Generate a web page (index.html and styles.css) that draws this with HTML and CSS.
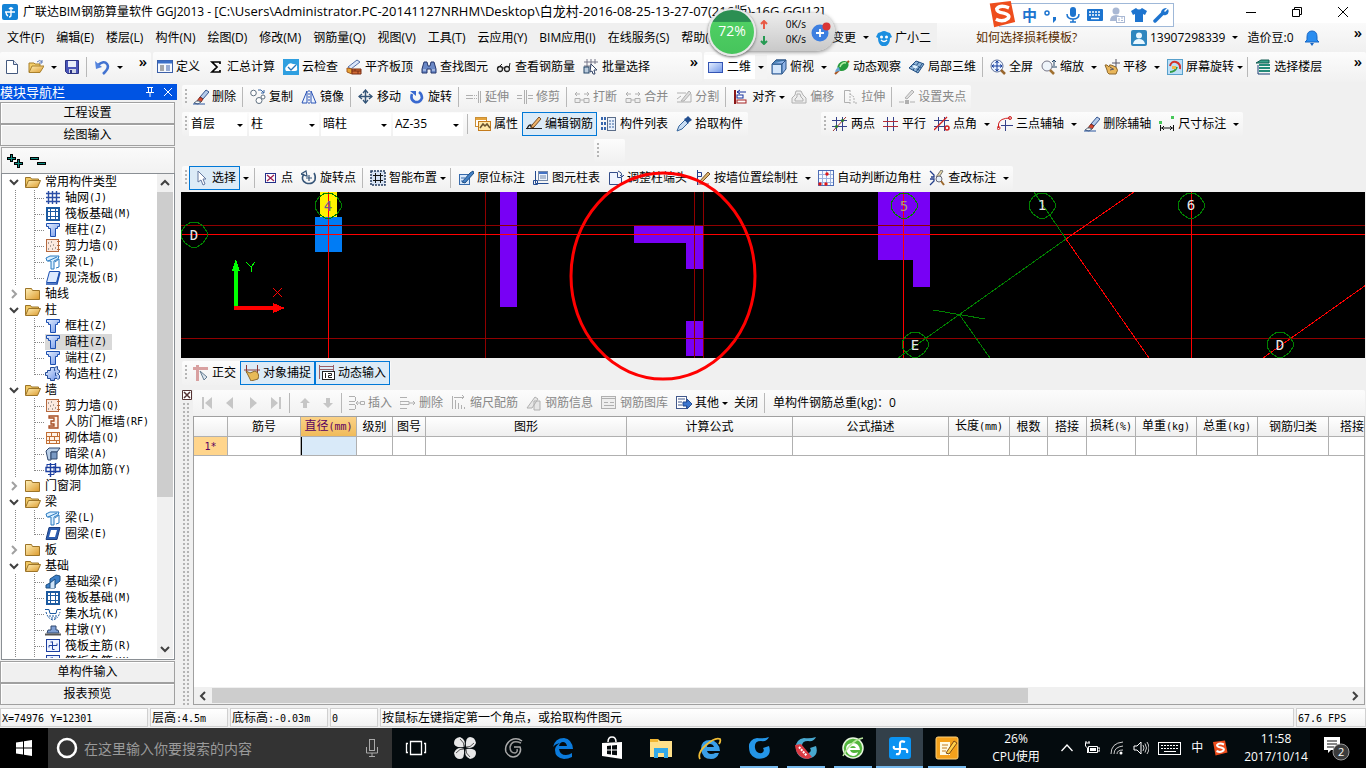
FILE: index.html
```html
<!DOCTYPE html>
<html lang="zh-CN">
<head>
<meta charset="utf-8">
<title>广联达BIM钢筋算量软件 GGJ2013</title>
<link rel="stylesheet" href="styles.css">
</head>
<body>
<svg class="sprite" aria-hidden="true">
<defs>
<linearGradient id="gFold" x1="0" y1="0" x2="1" y2="1"><stop offset="0" stop-color="#fff0b8"/><stop offset="1" stop-color="#dc9a2c"/></linearGradient>
<linearGradient id="gBlue" x1="0" y1="0" x2="1" y2="1"><stop offset="0" stop-color="#e8f1ff"/><stop offset="1" stop-color="#6f95e8"/></linearGradient>
<path id="bb" d="M10 1h6l6 4 4 6v5l-4 6-6 4h-6l-6-4-4-6v-5l4-6z"/>
</defs>
<symbol id="app" viewBox="0 0 16 16"><rect width="16" height="16" rx="2" fill="#1583d6"/><path d="M9 3v8q0 2-2 2M3 8h10M7 5q2-2 4 0M4 8q0 3 2 4" fill="none" stroke="#fff" stroke-width="1.4"/></symbol>
<symbol id="new" viewBox="0 0 16 16"><path d="M2.500 1.500h7l4 4v9h-11z" fill="#fff" stroke="#44597e"/><path d="M9.500 1.500v4h4" fill="#dfe7f5" stroke="#44597e"/></symbol>
<symbol id="open" viewBox="0 0 16 16"><path d="M1 13V4h5l1 1h5v2" fill="#f3cf6c" stroke="#a9802c"/><path d="M1 13.500l3-6.500h12l-4 6.500z" fill="url(#gFold)" stroke="#a9802c"/><path d="M9 3q3-3 5 0M14 1v3h-3" fill="none" stroke="#5a77b5"/></symbol>
<symbol id="save" viewBox="0 0 16 16"><path d="M1.500 1.500h13v13h-11l-2-2z" fill="#4a55b8" stroke="#2c3482"/><rect x="4" y="2" width="8" height="6" fill="#e9eef9"/><rect x="5" y="10" width="7" height="4" fill="#cfd5e6"/><rect x="6" y="11" width="2" height="3" fill="#2c3482"/></symbol>
<symbol id="undo" viewBox="0 0 16 16"><path d="M4 6q6-5 9-1t-4 10" fill="none" stroke="#4373d0" stroke-width="2.600"/><path d="M1 2l1 8 6-2z" fill="#5585de"/></symbol>
<symbol id="define" viewBox="0 0 16 16"><rect x=".5" y="1.500" width="15" height="12" fill="#f4f8ff" stroke="#3b5fa8"/><path d="M1 3h14" stroke="#3b6fc8" stroke-width="3"/><path d="M3 7h4M3 9h4M3 11h4" stroke="#555"/><path d="M9 7h4M9 9h4M9 11h4" stroke="#3b5fa8"/></symbol>
<symbol id="sum" viewBox="0 0 16 16"><path d="M12 5V3H4l5 5-5 5h8v-2" fill="none" stroke="#000" stroke-width="1.700"/></symbol>
<symbol id="cloud" viewBox="0 0 16 16"><rect width="16" height="16" fill="#2f9fe0"/><path d="M3 12q-2-3 1-5 2-4 6-2 5 0 4 4 1 3-2 3z" fill="#fff"/><path d="M5 8l3 3 5-5" fill="none" stroke="#2474ba" stroke-width="1.300"/></symbol>
<symbol id="top" viewBox="0 0 16 16"><path d="M2 8l9-7 3 2-9 7z" fill="#dbe7fb" stroke="#5570a8"/><path d="M1 9l5 1v5l-5-2z" fill="#e6a438" stroke="#a85b1c"/><path d="M6 10h9v5H6zM6 12h9M9 10v2M12 12v3" fill="#d06a35" stroke="#7b2e14"/></symbol>
<symbol id="find" viewBox="0 0 16 16"><path d="M3 3h3l1 4h2l1-4h3l2 7v4h-5v-4H6v4H1v-4z" fill="#6a88c6" stroke="#25376d"/><path d="M2 11h3M11 11h3" stroke="#d5e0f7"/></symbol>
<symbol id="glass" viewBox="0 0 16 16"><circle cx="4" cy="10" r="2.500" fill="#eee" stroke="#222" stroke-width="1.300"/><circle cx="11" cy="10" r="2.500" fill="#eee" stroke="#222" stroke-width="1.300"/><path d="M6 9h3M2 9l4-4M13 9l1-5" fill="none" stroke="#222"/></symbol>
<symbol id="batch" viewBox="0 0 16 16"><path d="M1 3h14M1 7h7M4 0v12M8 0v9M12 0v5" stroke="#778" fill="none"/><rect x="1" y="8" width="5" height="6" fill="#bcd" stroke="#246"/><path d="M8 5l6 6-3 0 1 4-2 0-1-3-2 1z" fill="#fff" stroke="#346"/></symbol>
<symbol id="rect2" viewBox="0 0 16 16"><rect x=".5" y="3.500" width="14" height="10" fill="url(#gBlue)" stroke="#3354b4"/></symbol>
<symbol id="cube" viewBox="0 0 16 16"><path d="M1 5l4-4h10v9l-4 5H1z" fill="#8fb4e8" stroke="#2c5486"/><path d="M1 5h10v10M11 5l4-4M1 5l4-4h10" fill="#4c86b9" stroke="#2c5486"/><rect x="2" y="6" width="8" height="8" fill="#d4e6fa"/></symbol>
<symbol id="orbit" viewBox="0 0 16 16"><path d="M1 15L15 2" stroke="#aa5520" stroke-width="2"/><ellipse cx="9" cy="7" rx="6" ry="4.500" fill="#279a3c" transform="rotate(-35 9 7)"/><path d="M6 8q2-5 6-4" stroke="#b5f0a5" stroke-width="1.500" fill="none"/><path d="M1 13q1-4 4-5l1 4z" fill="#68a6d8"/></symbol>
<symbol id="part3" viewBox="0 0 16 16"><path d="M0 9l7-7 8 3-6 9z" fill="#8db4d8" stroke="#234f82"/><path d="M4 5l8 4M2 7l8 4M10 3L4 11M13 5L7 13" stroke="#234f82" fill="none"/><path d="M5 6l4 1-2 3-4-2z" fill="#dff2ff"/></symbol>
<symbol id="full" viewBox="0 0 16 16"><circle cx="7" cy="7" r="6" fill="#e9f1ff" stroke="#607199"/><path d="M11 11l4 4" stroke="#98652d" stroke-width="2.500"/><path d="M7 2v10M2 7h10M5.500 4L7 2l1.500 2M5.500 10L7 12l1.500-2M4 5.500L2 7l2 1.500M10 5.500L12 7l-2 1.500" fill="none" stroke="#123b9c"/></symbol>
<symbol id="zoomi" viewBox="0 0 16 16"><circle cx="6" cy="7" r="5" fill="#eef4fa" stroke="#778"/><path d="M9 11l4 4" stroke="#a07031" stroke-width="2.500"/><path d="M13 1v6M11 3l2-2 2 2M11 8h5" fill="none" stroke="#246"/></symbol>
<symbol id="pan" viewBox="0 0 16 16"><path d="M1 6q2-1 4 2 0-3 2-2l5 2q3 3 0 7H5q-2-1-2-4z" fill="#e9b65a" stroke="#8c672c"/><path d="M12 0v8M8 4h8M6 8l3 2M6 11l4-1" stroke="#556" fill="none"/></symbol>
<symbol id="rots" viewBox="0 0 16 16"><rect x=".5" y=".5" width="15" height="15" fill="#bcdff7" stroke="#58a0cb"/><path d="M3 7q1-5 6-4 5 2 4 7" fill="none" stroke="#d3332c" stroke-width="2"/><path d="M3 13q5 0 7-5" stroke="#339b45" stroke-width="2" fill="none"/><rect x="5" y="7" width="4" height="3" fill="#f4b848"/></symbol>
<symbol id="floors" viewBox="0 0 16 16"><path d="M1 4l5-3h8v3z" fill="#3aa08a" stroke="#145c52"/><path d="M4 6h11M4 9h11M4 12h11" stroke="#248b79" stroke-width="2"/><path d="M3 6v9h12" stroke="#173c72" fill="none"/></symbol>
<symbol id="brush" viewBox="0 0 16 16"><path d="M13 1l3 2-6 7-3-2z" fill="#b5cbea" stroke="#35558f"/><path d="M7 8l3 2-2 3-4-1z" fill="#d9472f" stroke="#7a2b20"/><path d="M1 14q3-3 5-2l2 1-3 2z" fill="#f7f7f7" stroke="#567"/><path d="M0 15h12" stroke="#2a56a0"/></symbol>
<symbol id="copy" viewBox="0 0 16 16"><circle cx="3.500" cy="4" r="2.800" fill="#fff" stroke="#607080"/><circle cx="9" cy="11.500" r="3" fill="#fff" stroke="#607080"/><circle cx="13" cy="8" r="2" fill="#fff" stroke="#607080"/><path d="M8 1h3l3 3M14 1v3h-3" stroke="#3765a2" fill="none"/></symbol>
<symbol id="mirror" viewBox="0 0 16 16"><path d="M6 2v12H1zM10 2v12h5z" fill="#eef5ff" stroke="#2952b5"/><path d="M8 1v14" stroke="#2952b5" stroke-dasharray="2 1"/></symbol>
<symbol id="move" viewBox="0 0 16 16"><path d="M7.500 2v12M1 7.500h13" stroke="#345578" stroke-width="1.500"/><path d="M5 4l2.500-3L10 4M5 11l2.500 3L10 11M4 5L1 7.500 4 10M11 5l3 2.500L11 10" fill="none" stroke="#345578" stroke-width="1.300"/></symbol>
<symbol id="rotate" viewBox="0 0 16 16"><path d="M3 5q-2 6 3 8 5 1 7-4 0-4-3-6" fill="none" stroke="#3969cf" stroke-width="2.600"/><path d="M1 2h6v5z" fill="#3969cf"/></symbol>
<symbol id="extend" viewBox="0 0 16 16"><path d="M0 6.500h6M0 9.500h6" stroke="currentColor"/><path d="M6 6.500h5M6 9.500h5" stroke="currentColor" stroke-dasharray="1 1"/><path d="M12.500 2v12M14.500 2v12" stroke="currentColor"/></symbol>
<symbol id="trim" viewBox="0 0 16 16"><path d="M0 6.500h5M0 9.500h5M7.500 1v14M9.500 1v14M11 6.500h5M11 9.500h5" stroke="currentColor"/></symbol>
<symbol id="brk" viewBox="0 0 16 16"><path d="M1 9.500h5v4H1zM10 9.500h5v4h-5z" fill="#eee" stroke="currentColor"/><path d="M1 5h5M3 3L1 5l2 2M10 5h5M13 3l2 2-2 2M6 11h4" fill="none" stroke="currentColor"/></symbol>
<symbol id="split" viewBox="0 0 16 16"><path d="M1 4h9M1 13h14V5M1 10l4-3" fill="none" stroke="currentColor"/><path d="M5 12L13 2l2 2-7 8z" fill="#ddd" stroke="currentColor"/></symbol>
<symbol id="align" viewBox="0 0 16 16"><path d="M2 1v14" stroke="#8b1717" stroke-width="2"/><path d="M4 3h9M7 1L4 3l3 2" fill="none" stroke="#152f9d"/><rect x="4" y="6" width="6" height="3" fill="#fff" stroke="#152f9d"/><rect x="4" y="11" width="9" height="3" fill="#fff" stroke="#a52222"/></symbol>
<symbol id="offset" viewBox="0 0 16 16"><path d="M5 2h5l2 4 3 3v5H1V9l3-3z" fill="#eee" stroke="currentColor"/><path d="M6 5h3l1 3 2 2v2H4v-2l2-2z" fill="none" stroke="currentColor"/></symbol>
<symbol id="stretch" viewBox="0 0 16 16"><path d="M8 1.500H2.500v12H8" fill="none" stroke="currentColor"/><path d="M8 1v14M8 5l4 3v6h3" fill="none" stroke="currentColor" stroke-dasharray="2 1"/></symbol>
<symbol id="grip" viewBox="0 0 16 16"><path d="M0 13h5M11 13h5" stroke="currentColor"/><rect x="6" y="11" width="4" height="4" fill="currentColor"/><path d="M6 9l7-8 2 2-7 7z" fill="#ddd" stroke="currentColor"/></symbol>
<symbol id="prop" viewBox="0 0 16 16"><rect x=".5" y="1.500" width="11" height="9" fill="#fff" stroke="#c98f36"/><path d="M1 3h10" stroke="#e4a33c" stroke-width="2"/><rect x="3.500" y="5.500" width="12" height="9" fill="#ffe9a8" stroke="#c47b1c"/><path d="M5 12l3-4 2 2 2-2 3 4" fill="none" stroke="#69532d" stroke-width="1.500"/></symbol>
<symbol id="edit" viewBox="0 0 16 16"><path d="M0 12.500h16" stroke="#222"/><path d="M1 13q2-5 4-4-1 3 3 2" fill="none" stroke="#222" stroke-width="1.300"/><path d="M6 9L13 1l2 2-7 8-3 1z" fill="#efb46a" stroke="#764b24"/></symbol>
<symbol id="list" viewBox="0 0 16 16"><path d="M0 2.500h5M0 7.500h5M0 12.500h5" stroke="#3767ae" stroke-width="3" stroke-dasharray="2 1"/><rect x="6.500" y="1.500" width="8" height="13" fill="#e8f0fb" stroke="#5b6d89"/><path d="M8 5h2M8 8h2M8 11h2M11 5h2M11 8h2M11 11h2" stroke="#345f9c"/></symbol>
<symbol id="pick" viewBox="0 0 16 16"><path d="M1 15l2-5 6-6 3 3-6 6z" fill="#c9ddf3" stroke="#36669d"/><path d="M8 3l2-1 2-2 4 4-3 2-1 2z" fill="#234f90"/></symbol>
<symbol id="axis2" viewBox="0 0 16 16"><path d="M4.500 1v14M10.500 1v14M0 4.500h15M0 10.500h15" stroke="#35418a"/><path d="M1 15L14 1" stroke="#9b3230"/><circle cx="4.500" cy="10.500" r="1.500" fill="#287b2d"/><circle cx="10.500" cy="4.500" r="1.500" fill="#287b2d"/></symbol>
<symbol id="para" viewBox="0 0 16 16"><path d="M4.500 1v14M10.500 1v14" stroke="#35418a"/><path d="M0 5.500h15M0 10.500h15" stroke="#b12b35"/></symbol>
<symbol id="angle" viewBox="0 0 16 16"><path d="M4.500 1v14M10.500 1v14M0 4.500h15M0 10.500h10" stroke="#35418a"/><path d="M0 14L13 1" stroke="#d02020" stroke-width="1.300"/><circle cx="13" cy="12" r="2" fill="none" stroke="#d02020" stroke-width="1.500"/></symbol>
<symbol id="arc" viewBox="0 0 16 16"><path d="M1.500 12V8q1-6 12-6" fill="none" stroke="#d02020"/><path d="M8.500 4v11M4 9.500h12" stroke="#35418a"/><circle cx="1.500" cy="12" r="1.500" fill="none" stroke="#d02020"/><circle cx="13" cy="2" r="1.500" fill="none" stroke="#d02020"/></symbol>
<symbol id="dim" viewBox="0 0 16 16"><path d="M1.500 9v6M14.500 9v6M2 12h12M5 10l-2 2 2 2M11 10l2 2-2 2" fill="none" stroke="#111"/><path d="M0 5h3v3H0zM12 0h3v3h-3z" fill="#47c759"/></symbol>
<symbol id="cursor" viewBox="0 0 16 16"><path d="M5 1v11l3-2 2 5 2-1-2-5h3z" fill="#fff" stroke="#6478a0"/></symbol>
<symbol id="point" viewBox="0 0 16 16"><rect x="3.500" y="3.500" width="10" height="9" fill="#fff" stroke="#24308a"/><path d="M5 5l7 6M12 5l-7 6" stroke="#9c2050" stroke-width="1.300"/></symbol>
<symbol id="rotp" viewBox="0 0 16 16"><path d="M3 4q-4 6 2 9 6 2 9-3 1-4-1-7" fill="none" stroke="#365578" stroke-width="1.500"/><path d="M0 4l5-3 1 5zM8 5v6M5 8h6" fill="none" stroke="#365578" stroke-width="1.200"/></symbol>
<symbol id="smart" viewBox="0 0 16 16"><rect x="1" y="1" width="14" height="14" fill="#d6e2f3" stroke="#263e62" stroke-width="1.500" stroke-dasharray="2 1"/><path d="M5.500 3v10M10.500 3v10M3 5.500h10M3 10.500h10" stroke="#111"/><path d="M7 7h2v2H7z" fill="#d6e2f3"/></symbol>
<symbol id="note" viewBox="0 0 16 16"><rect x="1.500" y="4.500" width="10" height="10" fill="#d9e8fa" stroke="#366aab"/><path d="M4 12l8-9 3-2 1 2-9 10z" fill="#4380c5" stroke="#204f82"/><path d="M3 8h4M3 11h3" stroke="#366aab"/></symbol>
<symbol id="ctable" viewBox="0 0 16 16"><path d="M2.500 1v12.500h13M.5 10.500h4v4h-4z" fill="none" stroke="#234b91"/><rect x="5.500" y="1.500" width="9" height="9" fill="#eef5ff" stroke="#7489a8"/><path d="M6 3h8" stroke="#4472c4" stroke-width="2"/><path d="M7 6h6M7 8h6" stroke="#7489a8"/></symbol>
<symbol id="adj" viewBox="0 0 16 16"><path d="M1.500 2.500h8v5h4v7h-12z" fill="#f0f5ff" stroke="#344e8b"/><path d="M10 1q4 1 4 5M12 5l2 2 2-2" fill="none" stroke="#344e8b"/></symbol>
<symbol id="wall" viewBox="0 0 16 16"><path d="M2.500 0v15M2.500 2.500h4v4h-4" fill="none" stroke="#243f8b"/><path d="M4 12L13 2l2 2-9 9z" fill="#dbb46d" stroke="#76502b"/><path d="M3 14h11" stroke="#c02c2c"/></symbol>
<symbol id="auto" viewBox="0 0 16 16"><rect x=".5" y=".5" width="15" height="15" fill="#f6faff" stroke="#4d6db6"/><path d="M4.500 1v14M8.500 1v14M12.500 1v14M1 4.500h14M1 8.500h14M1 12.500h14" stroke="#9bb1de"/><circle cx="9" cy="4" r="1.700" fill="#e01717"/><circle cx="2" cy="14" r="1.700" fill="#e01717"/><circle cx="8" cy="14" r="1.700" fill="#e01717"/></symbol>
<symbol id="check" viewBox="0 0 16 16"><path d="M1 1l4 4v2H2M1 9h4v2l-4 4" fill="none" stroke="#243f8b" stroke-width="1.300"/><path d="M7 7L12 0l2 1-5 8" fill="#e5d6a3" stroke="#777"/><circle cx="10" cy="9" r="3" fill="#e7f1fb" stroke="#667"/><path d="M12 11l3 4" stroke="#9d692d" stroke-width="2"/></symbol>
<symbol id="ortho" viewBox="0 0 16 16"><path d="M0 3.500h15M4.500 0v16" stroke="#d8a0a0" stroke-width="3"/><path d="M7 6l7 6-3 3z" fill="#dbe5ee" stroke="#667d91"/></symbol>
<symbol id="snap" viewBox="0 0 16 16"><path d="M2.500 0v8M13.500 0v8M0 5h16" stroke="#8b3838"/><path d="M2 6l4 2 5-2q5 2 3 8l-7 2-2-4z" fill="#e7ba58" stroke="#8c6a30"/></symbol>
<symbol id="dyn" viewBox="0 0 16 16"><path d="M0 1.500h15M0 4.500h15M.5 0v14M14.500 0v6" stroke="#985e66" fill="none"/><rect x="3.500" y="6.500" width="12" height="8" fill="#fff" stroke="#222"/><path d="M6.500 8v5M9 8.500h3.500v2H9.500v2H13" fill="none" stroke="#222"/></symbol>
<symbol id="first" viewBox="0 0 16 16"><path d="M3 2h2v12H3zM13 2v12L6 8z" fill="#c6c6c6"/></symbol>
<symbol id="prev" viewBox="0 0 16 16"><path d="M11 2v12L4 8z" fill="#c6c6c6"/></symbol>
<symbol id="next" viewBox="0 0 16 16"><path d="M5 2v12l7-6z" fill="#c6c6c6"/></symbol>
<symbol id="last" viewBox="0 0 16 16"><path d="M11 2h2v12h-2zM3 2v12l7-6z" fill="#c6c6c6"/></symbol>
<symbol id="upi" viewBox="0 0 16 16"><path d="M8 3l5 5h-3v5H6V8H3z" fill="#c6c6c6"/></symbol>
<symbol id="dni" viewBox="0 0 16 16"><path d="M8 13l5-5h-3V3H6v5H3z" fill="#c6c6c6"/></symbol>
<symbol id="ins" viewBox="0 0 16 16"><path d="M0 1.500h6M0 6.500h6M0 9.500h6M0 14.500h6M6.500 2v4M6.500 10v4M7 8h4M9 6L7 8l2 2M11.500 6.500h4v3h-4z" fill="none" stroke="currentColor"/></symbol>
<symbol id="rem" viewBox="0 0 16 16"><path d="M0 2.500h7M0 13.500h7M0 6.500h9v3H0zM9 8h6M13 6l2 2-2 2" fill="none" stroke="currentColor"/></symbol>
<symbol id="scale" viewBox="0 0 16 16"><path d="M1.500 1v13M3 2.500h10M11 0l2 2-2 2M4.500 5v9M7.500 8v6M10.500 10v4M13.500 12v2" fill="none" stroke="currentColor"/></symbol>
<symbol id="info" viewBox="0 0 16 16"><path d="M1 13L9 2l3 2-6 9zM8 6h6v9H8z" fill="#e6e6e6" stroke="currentColor"/></symbol>
<symbol id="lib" viewBox="0 0 16 16"><rect x=".5" y="1.500" width="14" height="12" fill="#eee" stroke="currentColor"/><path d="M1 3.500h13M3 7.500h4M9 7.500h4M3 10.500h10" stroke="currentColor"/></symbol>
<symbol id="other" viewBox="0 0 16 16"><rect x=".5" y="1.500" width="10" height="12" fill="#fff" stroke="#42588b"/><path d="M2 4h7M2 7h4M2 10h4" stroke="#42588b"/><path d="M7 7h4V4l5 5-5 5v-3H7z" fill="#3c76cf" stroke="#234b91"/></symbol>
<symbol id="fo" viewBox="0 0 16 16"><path d="M.5 13V3.500h5l1 1.500h7V7" fill="#f0c864" stroke="#9c7428"/><path d="M.5 13.500l3-7h12l-3 7z" fill="url(#gFold)" stroke="#9c7428"/></symbol>
<symbol id="fc" viewBox="0 0 16 16"><path d="M.5 13.500V2.500h6l1 2h7v9z" fill="url(#gFold)" stroke="#9c7428"/></symbol>
<symbol id="tGrid" viewBox="0 0 16 16"><path d="M3.500 1v13M7.500 1v13M11.500 1v13M1 3.500h14M1 7.500h14M1 11.500h14" stroke="#2b4ea5" stroke-width="1.400"/></symbol>
<symbol id="tRaft" viewBox="0 0 16 16"><rect x="2" y="2" width="12" height="12" fill="#fff" stroke="#1c5aa0" stroke-width="2"/><path d="M5.500 2v12M10.500 2v12M2 5.500h12M2 10.500h12" stroke="#1c5aa0"/><rect x="5.500" y="5.500" width="5" height="5" fill="#fff" stroke="#1c5aa0"/></symbol>
<symbol id="tCol" viewBox="0 0 16 16"><path d="M1.500 1.500h13v3h-2v2h-2v8h-5v-8h-2v-2h-2z" fill="url(#gBlue)" stroke="#1c4fb0"/></symbol>
<symbol id="tShear" viewBox="0 0 16 16"><rect x="1.500" y="1.500" width="12" height="12" fill="#fbe9df" stroke="#b5693e"/><path d="M3 5h1M6 4h1M5 8h1M8 7h1M3 11h1M7 11h1M10 10h1" stroke="#555"/><path d="M12 3.500h3M12 7.500h3M12 11.500h3" stroke="#b5693e"/></symbol>
<symbol id="tBeam" viewBox="0 0 16 16"><path d="M1 4l4-2h9l-1 3-4 2v8H6V7H2z" fill="#d9efff" stroke="#2a7ac0"/><path d="M3 7l9-4M10 8l4-3v8l-3 1" stroke="#2a7ac0" fill="none"/></symbol>
<symbol id="tSlab" viewBox="0 0 16 16"><path d="M4.500 1.500h10l-3 11h-10z" fill="#dceaff" stroke="#1c4fb0"/><path d="M1 14h11l3-12" fill="none" stroke="#1c4fb0" stroke-width="1.500"/></symbol>
<symbol id="tStruct" viewBox="0 0 16 16"><path d="M5.500 1.500h4v3h3v2h-2v3h2v3h-3v2h-4v-2h-3v-3h-2v-3h2v-2h3z" fill="url(#gBlue)" stroke="#224b96"/><path d="M9.500 1.500l3-1v3l2 1v2l-2 1 2 2v3l-2 1" fill="#b9cdf3" stroke="#224b96"/></symbol>
<symbol id="tDoor" viewBox="0 0 16 16"><path d="M4 2h9v12H4v-2h5v-2H6V7h3V4H4z" fill="#fff1e6" stroke="#a84c22" stroke-width="1.300"/></symbol>
<symbol id="tBrick" viewBox="0 0 16 16"><rect x="1.500" y="2.500" width="13" height="11" fill="#fff3e8" stroke="#c26f35"/><path d="M1 6.500h14M1 10.500h14M6.500 3v3M11.500 10v3M4.500 10v3M9.500 6v4M4.500 6v4M12.500 3v3" stroke="#c26f35"/></symbol>
<symbol id="tDark" viewBox="0 0 16 16"><path d="M1 5l3-3h11l-3 4H6v8H3z" fill="#b9cfe8" stroke="#30486f"/><path d="M6 6h6v7H6z" fill="#7999c3" stroke="#30486f"/></symbol>
<symbol id="tReb" viewBox="0 0 16 16"><path d="M1 5.500h14v4H1zM5.500 1v14M10.500 1v10" fill="none" stroke="#1c3fa0" stroke-width="1.400"/><path d="M2 2.500h9M2 2v4M3 12.500h6V4" stroke="#1c3fa0" fill="none"/></symbol>
<symbol id="tRing" viewBox="0 0 16 16"><path d="M4 1.500h11l-3 12H1z" fill="#2c5db0" stroke="#1c3f80"/><path d="M6 4h6l-2 7H4z" fill="#fff"/></symbol>
<symbol id="tFBeam" viewBox="0 0 16 16"><path d="M1 14v-3l4-2V5l6-4 4 1v5l-5 4v3z" fill="#3c7fc8" stroke="#1c4f80"/><path d="M5 14V9l5-4v9" fill="#cfe4f8" stroke="#1c4f80"/></symbol>
<symbol id="tPit" viewBox="0 0 16 16"><path d="M0 3.500h4l1 4h6l1-4h4" fill="none" stroke="#1c5aa0"/><path d="M1 6q2 7 7 8 5-1 7-8M4 10h8M6 12h5" fill="none" stroke="#1c5aa0" stroke-dasharray="2 1"/></symbol>
<symbol id="tPier" viewBox="0 0 16 16"><path d="M6 4h5v4h2l1 3H2l1-3h3z" fill="#7f9fd4" stroke="#30486f"/><path d="M0 12.500h16" stroke="#555" stroke-width="2"/></symbol>
<symbol id="tMain" viewBox="0 0 16 16"><rect x="1.500" y="1.500" width="13" height="12" fill="#eef4ff" stroke="#1c3fa0"/><path d="M7.500 4h-2M7.500 3.500v8h2M4 9.500v-2h8v-2" fill="none" stroke="#1c3fa0"/></symbol>
<symbol id="sogou" viewBox="0 0 16 16"><path d="M1 2l12-1.500 2.500 12L3.500 15.500z" fill="#ee4d1c"/><path d="M12 4.500Q7 2.500 5 5q0 2 4 2.500 4 1 2.500 3-3 2.500-7 .5" fill="none" stroke="#fff" stroke-width="2"/></symbol>
<symbol id="mic" viewBox="0 0 16 16"><rect x="5" y="0" width="6" height="10" rx="3" fill="currentColor"/><path d="M2 7q0 5 6 5t6-5M8 12v3M5 15h6" fill="none" stroke="currentColor" stroke-width="1.500"/></symbol>
<symbol id="kbd" viewBox="0 0 16 16"><rect x="0" y="2" width="16" height="12" rx="1" fill="currentColor"/><path d="M2 5h12M2 8h12" stroke="#fff" stroke-width="1.500" stroke-dasharray="2 1"/><path d="M4 11.500h8" stroke="#fff" stroke-width="1.500"/></symbol>
<symbol id="man" viewBox="0 0 16 16"><circle cx="7" cy="4" r="3.500" fill="#a9b8d4"/><path d="M1 14q0-6 6-6t5 6z" fill="#a9b8d4"/><rect x="7.500" y="9.500" width="8" height="6" fill="#fff" stroke="#a9b8d4"/><path d="M10 11v3M12 11h2M12 13.500h2" stroke="#a9b8d4"/></symbol>
<symbol id="shirt" viewBox="0 0 16 16"><path d="M5 1q3 3 6 0l5 3-2 4-2-1v8H4V7L2 8 0 4z" fill="#1d74cf"/></symbol>
<symbol id="wrench" viewBox="0 0 16 16"><path d="M2 14l8-8" stroke="#1d74cf" stroke-width="3.500" stroke-linecap="round"/><path d="M14 1l-3 3 1 1 3-3q2 4-2 6-4 1-5-3 1-4 6-4z" fill="#1d74cf"/></symbol>
<symbol id="blob" viewBox="0 0 16 16"><path d="M2 3l3-1q3-2 6 0l3 1 2 4-2 1q0 6-4 8H6q-4-2-4-8L0 7z" fill="#1c8fe0"/><circle cx="5.500" cy="7" r="1.500" fill="#fff"/><circle cx="10.500" cy="7" r="1.500" fill="#fff"/><path d="M5 10q3 3 6 0" fill="none" stroke="#fff" stroke-width="1.300"/></symbol>
<symbol id="user" viewBox="0 0 16 16"><rect width="16" height="16" rx="2" fill="#2e86bf"/><circle cx="8" cy="5.500" r="3" fill="#e9f7ff"/><path d="M2 14q1-5 6-5t6 5z" fill="#e9f7ff"/></symbol>
<symbol id="bell" viewBox="0 0 16 16"><path d="M8 1q5 0 5 6v3l2 2H1l2-2V7q0-6 5-6z" fill="#2a8df0" stroke="#1766c4"/><path d="M6 13h4l-2 3z" fill="#1766c4"/></symbol>
<symbol id="win" viewBox="0 0 16 16"><path d="M0 2.500l7-1v6H0zM8 1.300L16 0v7.500H8zM0 8.500h7v6l-7-1zM8 8.500h8V16l-8-1.200z" fill="#fff"/></symbol>
<symbol id="tmic" viewBox="0 0 16 20"><rect x="5.500" y="1.500" width="5" height="11" fill="none" stroke="#aaa"/><path d="M2.500 9v6h11V9M8 15v3M5 18.500h6" fill="none" stroke="#aaa"/></symbol>
<symbol id="tview" viewBox="0 0 24 24"><path d="M6.500 5.500h11v13h-11zM4 7.500H2.500v9H4M20 7.500h1.500v9H20" fill="none" stroke="#fff" stroke-width="1.300"/></symbol>
<symbol id="fan" viewBox="0 0 24 24"><path d="M11 11Q1 12 1 7t6-6q7 3 4 10zM13 11Q12 1 17 1t6 6q-3 7-10 4zM13 13q10-1 10 4t-6 6q-7-3-4-10zM11 13q1 10-4 10t-6-6q3-7 10-4z" fill="#e8e8e8"/><path d="M7 3q5 4 4 8M21 7q-4 5-8 4M17 21q-5-4-4-8M3 17q4-5 8-4" fill="none" stroke="#555"/></symbol>
<symbol id="swirl" viewBox="0 0 24 24"><path d="M20 5q-5-4-11-1-7 5-5 12 4 7 11 4 5-4 3-9h-6" fill="none" stroke="#aaa" stroke-width="1.500"/><path d="M19 7Q10 3 8 11q0 6 5 6 3-1 2-4" fill="none" stroke="#999" stroke-width="1.500"/></symbol>
<symbol id="edge" viewBox="0 0 24 24"><path d="M2 11Q4 2 13 2q8 1 9 11H8q1 6 7 6 3 0 6-2v4q-4 2-8 2-9-1-9-9 0-4 5-7-5 1-7 4zM8 10h8q-1-4-4-4t-4 4z" fill="#0b7bdc"/></symbol>
<symbol id="store" viewBox="0 0 24 24"><path d="M2 7l20-1v17l-20-3z" fill="#fff"/><path d="M8 6q0-5 4-5t4 5" fill="none" stroke="#fff" stroke-width="1.500"/><path d="M7 10l4-.5v4H7zM12 9.400l5-.4v4.500h-5zM7 14.500h4v4l-4-.5zM12 14.500h5v4.800l-5-.6z" fill="#050b0e"/></symbol>
<symbol id="expl" viewBox="0 0 24 24"><path d="M1 3h8l2 2h12v16H1z" fill="#ffe08a"/><path d="M1 3h8v3H1z" fill="#f2b632"/><path d="M5 12h14v10h-4v-5H9v5H5z" fill="#33a9e8"/></symbol>
<symbol id="ie" viewBox="0 0 24 24"><path d="M3 13q0-9 9-9 9 1 10 11H9q1 3 4 3t4-1h4q-2 6-8 6-9 0-10-10zm6-2h7q-1-3-4-3t-3 3z" fill="#3a9fe8"/><path d="M2 23Q-1 17 8 9 17 1 22 3q1 2-1 5" fill="none" stroke="#f0bd36" stroke-width="1.800"/></symbol>
<symbol id="gg" viewBox="0 0 24 24"><path d="M22 1q-2 5-8 4-7 0-6 7 1 6 7 5 3-2 1-5l6-2q3 9-5 12-9 3-14-5Q-1 4 10 2q6 1 12-1z" fill="#2496e8"/></symbol>
<symbol id="gg2" viewBox="0 0 24 24"><path d="M22 1q-2 5-8 4-7 0-6 7 1 6 7 5 3-2 1-5l6-2q3 9-5 12-9 3-14-5Q-1 4 10 2q6 1 12-1z" fill="#48a8cf"/><path d="M1 9l6-1 11 13-4 2Q2 22 1 9z" fill="#da3b43"/><path d="M5 11l8 9" stroke="#fff" stroke-width="2" stroke-dasharray="2 1"/></symbol>
<symbol id="g360" viewBox="0 0 24 24"><circle cx="12" cy="12" r="10" fill="#52b53c" stroke="#e8f7df" stroke-width="1.500"/><path d="M5 13q0-6 7-6 6 0 7 7H9q1 3 4 3 3 0 4-1-1 4-5 4-6-1-7-7zm4-1h6q-1-2-3-2t-3 2z" fill="#fff"/><path d="M2 20Q10 4 22 2" stroke="#b9e79e" fill="none" stroke-width="1.500"/></symbol>
<symbol id="ggj" viewBox="0 0 24 24"><rect x="1" y="1" width="22" height="22" rx="3" fill="#0b93f2"/><path d="M17 6q-5-2-5 2v7q0 4-4 3M6 10q-1 3 2 3h9q3 0 2 4" fill="none" stroke="#fff" stroke-width="2.200"/></symbol>
<symbol id="memo" viewBox="0 0 24 24"><rect x="1" y="1" width="22" height="22" rx="2" fill="#f4a11c" stroke="#ffd27a"/><path d="M5 6h10v13H5z" fill="#fffbe5"/><path d="M7 9h6M7 12h5M7 15h4" stroke="#c07a20"/><path d="M11 17L19 5l3 2-8 11z" fill="#ffcf4a" stroke="#7b4a14"/></symbol>
<symbol id="caretup" viewBox="0 0 16 16"><path d="M2.500 11L8 5l5.500 6" fill="none" stroke="#fff" stroke-width="1.300"/></symbol>
<symbol id="plug" viewBox="0 0 16 16"><path d="M4.500 6.500h9v6h-9zM14 8h2v3h-2M1 3h5M2 1v2M5 1v2M1.500 3v3l2 2v5" fill="none" stroke="#fff"/><path d="M6 8h6v3H6z" fill="#fff"/></symbol>
<symbol id="wifi" viewBox="0 0 16 16"><path d="M2 14Q2 3 14 2M5 14q0-7 9-8M8 14q0-4 6-4" fill="none" stroke="#ccc"/><circle cx="12" cy="13" r="1.500" fill="#fff"/></symbol>
<symbol id="vol" viewBox="0 0 16 16"><path d="M1 6h3l4-4v12l-4-4H1z" fill="none" stroke="#fff"/><path d="M10 5q2 3 0 6M12 3.500q3 4.500 0 9M14 2q4 6 0 12" fill="none" stroke="#ccc"/></symbol>
<symbol id="tkbd" viewBox="0 0 24 16"><rect x=".5" y="2.500" width="22" height="12" fill="none" stroke="#fff"/><path d="M3 5.500h18M3 8.500h18" stroke="#fff" stroke-dasharray="2 1"/><path d="M6 11.500h12" stroke="#fff"/></symbol>
<symbol id="msg" viewBox="0 0 28 28"><path d="M2 3h16v13h-9l-3 3v-3H2z" fill="#fff"/><path d="M5 7h10M5 10h10M5 13h7" stroke="#111"/><circle cx="19" cy="18" r="8" fill="#3b3b3b" stroke="#999"/></symbol>
</svg>

<div class="app">
<header class="title">
  <svg class="i"><use href="#app"/></svg>
  <h1>广联达BIM钢筋算量软件 GGJ2013 - <span>[C:\Users\Administrator.PC-20141127NRHM\Desktop\白龙村-2016-08-25-13-27-07(216版)-16G.GGJ12]</span></h1>
  <div class="winbtns">
    <button aria-label="最小化"><svg viewBox="0 0 12 12"><path d="M1 6.500h10" stroke="#000"/></svg></button>
    <button aria-label="还原"><svg viewBox="0 0 12 12"><path d="M1.500 3.500h7v7h-7zM3.500 3.500v-2h7v7h-2" fill="none" stroke="#000"/></svg></button>
    <button aria-label="关闭"><svg viewBox="0 0 12 12"><path d="M1 1l10 10M11 1L1 11" stroke="#000"/></svg></button>
  </div>
</header>

<div class="menurow">
  <nav class="menu">
    <button>文件(F)</button><button>编辑(E)</button><button>楼层(L)</button><button>构件(N)</button><button>绘图(D)</button><button>修改(M)</button><button>钢筋量(Q)</button><button>视图(V)</button><button>工具(T)</button><button>云应用(Y)</button><button>BIM应用(I)</button><button>在线服务(S)</button><button>帮助(H)</button>
  </nav>
  <div class="menu2"><button class="tb">新建变更</button><button class="car" aria-label="更多"></button><button class="tb"><svg class="i"><use href="#blob"/></svg>广小二</button></div>
  <div class="panel ask"><a href="#">如何选择损耗模板?</a></div>
  <div class="panel acct"><button class="tb"><svg class="i"><use href="#user"/></svg>13907298339</button><button class="car" aria-label="账号"></button><span class="beans">造价豆:0</span><button class="tb" aria-label="通知"><svg class="i"><use href="#bell"/></svg></button><button class="more" aria-label="更多">»</button></div>
</div>

<div class="toprow">
  <div class="bar b1"><button class="tb" aria-label="新建"><svg class="i"><use href="#new"/></svg></button><button class="tb" aria-label="打开"><svg class="i"><use href="#open"/></svg></button><button class="car" aria-label="打开选项"></button><button class="tb" aria-label="保存"><svg class="i"><use href="#save"/></svg></button><i class="sep"></i><button class="tb" aria-label="撤销"><svg class="i"><use href="#undo"/></svg></button><button class="car" aria-label="撤销选项"></button><button class="more" aria-label="更多">»</button></div>
  <div class="bar b2"><button class="tb"><svg class="i"><use href="#define"/></svg>定义</button><button class="tb"><svg class="i"><use href="#sum"/></svg>汇总计算</button><button class="tb"><svg class="i"><use href="#cloud"/></svg>云检查</button><button class="tb"><svg class="i"><use href="#top"/></svg>平齐板顶</button><button class="tb"><svg class="i"><use href="#find"/></svg>查找图元</button><button class="tb"><svg class="i"><use href="#glass"/></svg>查看钢筋量</button><button class="tb"><svg class="i"><use href="#batch"/></svg>批量选择</button><button class="more" aria-label="更多">»</button></div>
  <div class="bar b3"><span class="white"><button class="tb"><svg class="i"><use href="#rect2"/></svg>二维</button><button class="car" aria-label="二维选项"></button></span><button class="tb"><svg class="i"><use href="#cube"/></svg>俯视</button><button class="car" aria-label="俯视选项"></button><button class="tb"><svg class="i"><use href="#orbit"/></svg>动态观察</button><button class="tb"><svg class="i"><use href="#part3"/></svg>局部三维</button><i class="sep"></i><button class="tb"><svg class="i"><use href="#full"/></svg>全屏</button><button class="tb"><svg class="i"><use href="#zoomi"/></svg>缩放</button><button class="car" aria-label="缩放选项"></button><button class="tb"><svg class="i"><use href="#pan"/></svg>平移</button><button class="car" aria-label="平移选项"></button><button class="tb dd"><svg class="i"><use href="#rots"/></svg>屏幕旋转</button><i class="sep"></i><button class="tb"><svg class="i"><use href="#floors"/></svg>选择楼层</button><button class="more" aria-label="更多">»</button></div>
</div>

<main class="body">
<aside class="side">
  <div class="sidehead"><h2>模块导航栏</h2><button aria-label="固定"><svg viewBox="0 0 12 12"><path d="M3 1.500h6M4.500 1v5M7.500 1v5M2 6.500h8M6 7v4" stroke="#fff" fill="none"/></svg></button><button aria-label="关闭"><svg viewBox="0 0 12 12"><path d="M2 2l8 8M10 2l-8 8" stroke="#fff"/></svg></button></div>
  <button class="stack">工程设置</button>
  <button class="stack">绘图输入</button>
  <div class="sidetools"><button aria-label="全部展开"><svg viewBox="0 0 18 16"><path d="M5.500 1v8M1 5.500h9M12.500 6v9M8 10.500h9" stroke="#000" stroke-width="3"/><path d="M5.500 2v6M2 5.500h7M12.500 7v7M9 10.500h7" stroke="#0d8a80"/></svg></button><button aria-label="全部折叠"><svg viewBox="0 0 18 16"><path d="M1 5.500h9M8 10.500h9" stroke="#000" stroke-width="3"/><path d="M2 5.500h7M9 10.500h7" stroke="#0d8a80"/></svg></button></div>
  <div class="treebox">
  <ul class="tree" role="tree">
    <li class="g" role="treeitem"><svg class="chev"><path d="M1 3l4 4 4-4"/></svg><svg class="i"><use href="#fo"/></svg>常用构件类型</li>
    <li class="c"><span><svg class="i"><use href="#tGrid"/></svg>轴网<b>(J)</b></span></li>
    <li class="c"><span><svg class="i"><use href="#tRaft"/></svg>筏板基础<b>(M)</b></span></li>
    <li class="c"><span><svg class="i"><use href="#tCol"/></svg>框柱<b>(Z)</b></span></li>
    <li class="c"><span><svg class="i"><use href="#tShear"/></svg>剪力墙<b>(Q)</b></span></li>
    <li class="c"><span><svg class="i"><use href="#tBeam"/></svg>梁<b>(L)</b></span></li>
    <li class="c end"><span><svg class="i"><use href="#tSlab"/></svg>现浇板<b>(B)</b></span></li>
    <li class="g shut"><svg class="chev"><path d="M3 1l4 4-4 4"/></svg><svg class="i"><use href="#fc"/></svg>轴线</li>
    <li class="g"><svg class="chev"><path d="M1 3l4 4 4-4"/></svg><svg class="i"><use href="#fo"/></svg>柱</li>
    <li class="c"><span><svg class="i"><use href="#tCol"/></svg>框柱<b>(Z)</b></span></li>
    <li class="c"><span class="on"><svg class="i"><use href="#tCol"/></svg>暗柱<b>(Z)</b></span></li>
    <li class="c"><span><svg class="i"><use href="#tCol"/></svg>端柱<b>(Z)</b></span></li>
    <li class="c end"><span><svg class="i"><use href="#tStruct"/></svg>构造柱<b>(Z)</b></span></li>
    <li class="g"><svg class="chev"><path d="M1 3l4 4 4-4"/></svg><svg class="i"><use href="#fo"/></svg>墙</li>
    <li class="c"><span><svg class="i"><use href="#tShear"/></svg>剪力墙<b>(Q)</b></span></li>
    <li class="c"><span><svg class="i"><use href="#tDoor"/></svg>人防门框墙<b>(RF)</b></span></li>
    <li class="c"><span><svg class="i"><use href="#tBrick"/></svg>砌体墙<b>(Q)</b></span></li>
    <li class="c"><span><svg class="i"><use href="#tDark"/></svg>暗梁<b>(A)</b></span></li>
    <li class="c end"><span><svg class="i"><use href="#tReb"/></svg>砌体加筋<b>(Y)</b></span></li>
    <li class="g shut"><svg class="chev"><path d="M3 1l4 4-4 4"/></svg><svg class="i"><use href="#fc"/></svg>门窗洞</li>
    <li class="g"><svg class="chev"><path d="M1 3l4 4 4-4"/></svg><svg class="i"><use href="#fo"/></svg>梁</li>
    <li class="c"><span><svg class="i"><use href="#tBeam"/></svg>梁<b>(L)</b></span></li>
    <li class="c end"><span><svg class="i"><use href="#tRing"/></svg>圈梁<b>(E)</b></span></li>
    <li class="g shut"><svg class="chev"><path d="M3 1l4 4-4 4"/></svg><svg class="i"><use href="#fc"/></svg>板</li>
    <li class="g"><svg class="chev"><path d="M1 3l4 4 4-4"/></svg><svg class="i"><use href="#fo"/></svg>基础</li>
    <li class="c"><span><svg class="i"><use href="#tFBeam"/></svg>基础梁<b>(F)</b></span></li>
    <li class="c"><span><svg class="i"><use href="#tRaft"/></svg>筏板基础<b>(M)</b></span></li>
    <li class="c"><span><svg class="i"><use href="#tPit"/></svg>集水坑<b>(K)</b></span></li>
    <li class="c"><span><svg class="i"><use href="#tPier"/></svg>柱墩<b>(Y)</b></span></li>
    <li class="c"><span><svg class="i"><use href="#tMain"/></svg>筏板主筋<b>(R)</b></span></li>
    <li class="c"><span><svg class="i"><use href="#tMain"/></svg>筏板负筋<b>(X)</b></span></li>
  </ul>
  <div class="vscroll"><svg class="chev"><path d="M1 7l4-4 4 4"/></svg><div class="track"><div class="thumb"></div></div><svg class="chev"><path d="M1 3l4 4 4-4"/></svg></div>
  </div>
  <button class="stack">单构件输入</button>
  <button class="stack">报表预览</button>
</aside>

<section class="work">
  <div class="row r1"><div class="bar"><i class="dots"></i><button class="tb"><svg class="i"><use href="#brush"/></svg>删除</button><i class="sep"></i><button class="tb"><svg class="i"><use href="#copy"/></svg>复制</button><button class="tb"><svg class="i"><use href="#mirror"/></svg>镜像</button><i class="sep"></i><button class="tb"><svg class="i"><use href="#move"/></svg>移动</button><button class="tb"><svg class="i"><use href="#rotate"/></svg>旋转</button><i class="sep"></i><button class="tb" disabled><svg class="i"><use href="#extend"/></svg>延伸</button><button class="tb" disabled><svg class="i"><use href="#trim"/></svg>修剪</button><i class="sep"></i><button class="tb" disabled><svg class="i"><use href="#brk"/></svg>打断</button><button class="tb" disabled><svg class="i"><use href="#brk"/></svg>合并</button><button class="tb" disabled><svg class="i"><use href="#split"/></svg>分割</button><i class="sep"></i><button class="tb dd"><svg class="i"><use href="#align"/></svg>对齐</button><button class="tb" disabled><svg class="i"><use href="#offset"/></svg>偏移</button><button class="tb" disabled><svg class="i"><use href="#stretch"/></svg>拉伸</button><i class="sep"></i><button class="tb" disabled><svg class="i"><use href="#grip"/></svg>设置夹点</button></div></div>
  <div class="row r2"><div class="bar"><i class="dots"></i><label class="combo first"><select aria-label="楼层"><option>首层</option></select></label><label class="combo"><select aria-label="类别"><option>柱</option></select></label><label class="combo"><select aria-label="类型"><option>暗柱</option></select></label><label class="combo"><select aria-label="构件"><option>AZ-35</option></select></label><i class="sep"></i><button class="tb"><svg class="i"><use href="#prop"/></svg>属性</button><button class="tb hot"><svg class="i"><use href="#edit"/></svg>编辑钢筋</button><button class="tb"><svg class="i"><use href="#list"/></svg>构件列表</button><button class="tb"><svg class="i"><use href="#pick"/></svg>拾取构件</button></div>
  <div class="bar"><i class="dots"></i><button class="tb"><svg class="i"><use href="#axis2"/></svg>两点</button><button class="tb"><svg class="i"><use href="#para"/></svg>平行</button><button class="tb"><svg class="i"><use href="#angle"/></svg>点角</button><button class="car" aria-label="点角选项"></button><button class="tb"><svg class="i"><use href="#arc"/></svg>三点辅轴</button><button class="car" aria-label="三点辅轴选项"></button><button class="tb"><svg class="i"><use href="#brush"/></svg>删除辅轴</button><button class="tb"><svg class="i"><use href="#dim"/></svg>尺寸标注</button><button class="car" aria-label="尺寸标注选项"></button></div></div>
  <div class="row r3"><div class="bar"><i class="dots"></i></div></div>
  <div class="row r4"><div class="bar"><i class="dots"></i><button class="tb hot"><svg class="i"><use href="#cursor"/></svg>选择</button><button class="car" aria-label="选择选项"></button><i class="sep"></i><button class="tb"><svg class="i"><use href="#point"/></svg>点</button><button class="tb"><svg class="i"><use href="#rotp"/></svg>旋转点</button><i class="sep"></i><button class="tb dd"><svg class="i"><use href="#smart"/></svg>智能布置</button><i class="sep"></i><button class="tb"><svg class="i"><use href="#note"/></svg>原位标注</button><button class="tb"><svg class="i"><use href="#ctable"/></svg>图元柱表</button><button class="tb"><svg class="i"><use href="#adj"/></svg>调整柱端头</button><button class="tb"><svg class="i"><use href="#wall"/></svg>按墙位置绘制柱</button><button class="car" aria-label="按墙位置绘制柱选项"></button><button class="tb"><svg class="i"><use href="#auto"/></svg>自动判断边角柱</button><button class="tb"><svg class="i"><use href="#check"/></svg>查改标注</button><button class="car" aria-label="查改标注选项"></button></div></div>
  <div class="canvas">
    <svg class="cad" shape-rendering="crispEdges">
      <g fill="#7800f5"><rect x="319" y="0" width="17" height="115"/><path d="M453 34h69v43h-17V51h-52zM505 129h17v35h-17zM697 0h52v95h-17V68h-35z"/></g>
      <rect x="139" y="0" width="17" height="25" fill="#fff200"/><rect x="134" y="25" width="27" height="35" fill="#007cf5"/>
      <g fill="#900000"><rect y="33" width="100%" height="1"/><rect y="146" width="100%" height="1"/><rect x="304" width="1" height="166"/><rect x="513" width="1" height="166"/><rect x="522" width="1" height="166"/></g>
      <g fill="#f00"><rect y="42" width="100%" height="1"/><rect x="147" width="1" height="166"/><rect x="722" width="1" height="166"/><rect x="1010" width="1" height="166"/></g>
      <path d="M953 0L885 47l83 119M1082 166l103-73 100-71" stroke="#f00" fill="none"/>
      <g stroke="#008000" fill="none"><path d="M885 47L717 166M853 0l32 47M752 118l52 9M778 122l31 44"/><use href="#bb" x="134"/><use href="#bb" x="710"/><use href="#bb" x="848"/><use href="#bb" x="997"/><use href="#bb" x="0" y="29"/><use href="#bb" x="721" y="139"/><use href="#bb" x="1086" y="139"/></g>
      <g class="marks"><text x="147" y="19" fill="#6e5a90">4</text><text x="723" y="19" fill="#b09a70">5</text><text x="861" y="18">1</text><text x="1010" y="18">6</text><text x="13" y="48">D</text><text x="734" y="158">E</text><text x="1099" y="158">D</text></g>
      <path d="M55 117V78" stroke="#0f0" stroke-width="4"/><path d="M55 67l4 12h-8z" fill="#0f0"/><path d="M53 116h42" stroke="#f00" stroke-width="4"/><path d="M104 116l-12-5v10z" fill="#f00"/>
      <path d="M65 70l5 5 4-5M70 75v5" stroke="#0f0" fill="none"/><path d="M92 96l9 9M101 96l-9 9" stroke="#f00"/>
    </svg>
    <svg class="mark" viewBox="0 0 188 210"><ellipse cx="94" cy="105" rx="92" ry="103" fill="none" stroke="#f00" stroke-width="3"/></svg>
  </div>
  <div class="row r5"><div class="bar"><i class="dots"></i><button class="tb"><svg class="i"><use href="#ortho"/></svg>正交</button><button class="tb hot"><svg class="i"><use href="#snap"/></svg>对象捕捉</button><button class="tb hot"><svg class="i"><use href="#dyn"/></svg>动态输入</button></div></div>
  <div class="detail">
    <div class="gripcol"><button aria-label="关闭面板"><svg viewBox="0 0 10 10"><path d="M.5 .5h9v9h-9z" fill="#fff" stroke="#533"/><path d="M2 2l6 6M8 2L2 8" stroke="#533" stroke-width="1.500"/></svg></button><div class="griptex"></div></div>
    <div class="dmain">
      <div class="bar dbar"><button class="tb nav" aria-label="第一条" disabled><svg class="i"><use href="#first"/></svg></button><button class="tb nav" aria-label="上一条" disabled><svg class="i"><use href="#prev"/></svg></button><button class="tb nav" aria-label="下一条" disabled><svg class="i"><use href="#next"/></svg></button><button class="tb nav" aria-label="最后一条" disabled><svg class="i"><use href="#last"/></svg></button><i class="sep"></i><button class="tb nav" aria-label="上移" disabled><svg class="i"><use href="#upi"/></svg></button><button class="tb nav" aria-label="下移" disabled><svg class="i"><use href="#dni"/></svg></button><i class="sep"></i><button class="tb" disabled><svg class="i"><use href="#ins"/></svg>插入</button><button class="tb" disabled><svg class="i"><use href="#rem"/></svg>删除</button><button class="tb" disabled><svg class="i"><use href="#scale"/></svg>缩尺配筋</button><button class="tb" disabled><svg class="i"><use href="#info"/></svg>钢筋信息</button><button class="tb" disabled><svg class="i"><use href="#lib"/></svg>钢筋图库</button><button class="tb dd"><svg class="i"><use href="#other"/></svg>其他</button><button class="tb">关闭</button><i class="sep"></i><span class="total">单构件钢筋总重(kg)：0</span></div>
      <div class="gridbox">
      <table>
        <colgroup><col class="w34"><col class="w73"><col class="w56"><col class="w36"><col class="w33"><col class="w201"><col class="w166"><col class="w156"><col class="w61"><col class="w38"><col class="w39"><col class="w49"><col class="w61"><col class="w61"><col class="w71"><col class="w71"></colgroup>
        <thead><tr><th></th><th>筋号</th><th class="sel">直径<b>(mm)</b></th><th>级别</th><th>图号</th><th>图形</th><th>计算公式</th><th>公式描述</th><th>长度<b>(mm)</b></th><th>根数</th><th>搭接</th><th>损耗<b>(%)</b></th><th>单重<b>(kg)</b></th><th>总重<b>(kg)</b></th><th>钢筋归类</th><th>搭接形式</th></tr></thead>
        <tbody><tr><th class="rowno"><b>1*</b></th><td></td><td class="cur"></td><td></td><td></td><td></td><td></td><td></td><td></td><td></td><td></td><td></td><td></td><td></td><td></td><td></td></tr></tbody>
      </table>
      <div class="hscroll"><svg class="chev"><path d="M7 1L3 5l4 4"/></svg><div class="htrack"><div class="hthumb"></div></div><svg class="chev"><path d="M3 1l4 4-4 4"/></svg></div>
      </div>
    </div>
  </div>
</section>
</main>

<footer class="status"><span class="s1"><b>X=74976 Y=12301</b></span><span class="s2">层高<b>:4.5m</b></span><span class="s3">底标高<b>:-0.03m</b></span><span class="s4"><b>0</b></span><span class="s5">按鼠标左键指定第一个角点，或拾取构件图元</span><span class="s6"><b>67.6 FPS</b></span></footer>

<div class="task">
  <button class="start" aria-label="开始"><svg><use href="#win"/></svg></button>
  <label class="search"><svg class="ring" viewBox="0 0 22 22"><circle cx="11" cy="11" r="9" fill="none" stroke="#fff" stroke-width="2.500"/></svg><input type="text" placeholder="在这里输入你要搜索的内容" aria-label="搜索"><svg class="tmic"><use href="#tmic"/></svg></label>
  <div class="apps"><button aria-label="任务视图"><svg><use href="#tview"/></svg></button><button aria-label="加速器"><svg><use href="#fan"/></svg></button><button aria-label="螺旋"><svg><use href="#swirl"/></svg></button><button aria-label="Edge"><svg><use href="#edge"/></svg></button><button aria-label="应用商店"><svg><use href="#store"/></svg></button><button aria-label="文件资源管理器"><svg><use href="#expl"/></svg></button><button aria-label="IE"><svg><use href="#ie"/></svg></button><button class="run" aria-label="广联达"><svg><use href="#gg"/></svg></button><button class="run" aria-label="广联达计价"><svg><use href="#gg2"/></svg></button><button class="run" aria-label="浏览器"><svg><use href="#g360"/></svg></button><button class="run act" aria-label="钢筋算量"><svg><use href="#ggj"/></svg></button><button class="run" aria-label="便笺"><svg><use href="#memo"/></svg></button></div>
  <div class="cpu"><span>26%</span><span>CPU使用</span></div>
  <div class="tray"><svg><use href="#caretup"/></svg><svg><use href="#plug"/></svg><svg><use href="#wifi"/></svg><svg><use href="#vol"/></svg><svg class="wide"><use href="#tkbd"/></svg><span>中</span><svg><use href="#sogou"/></svg></div>
  <div class="clock"><span>11:58</span><span>2017/10/14</span></div>
  <button class="notif" aria-label="通知"><svg><use href="#msg"/></svg><span>2</span></button>
</div>

<div class="ime"><svg class="logo"><use href="#sogou"/></svg><div class="imebar"><span>中</span><svg viewBox="0 0 16 16"><circle cx="4" cy="6" r="2" fill="none" stroke="currentColor" stroke-width="1.500"/><path d="M10 10h3v3l-3 3" fill="currentColor"/></svg><svg><use href="#mic"/></svg><svg><use href="#kbd"/></svg><svg><use href="#man"/></svg><svg><use href="#shirt"/></svg><svg><use href="#wrench"/></svg></div></div>

<div class="meter"><div class="caps"><div class="rates"><span><svg viewBox="0 0 8 10"><path d="M4 1v8M1 4l3-3 3 3" fill="none" stroke="#e85a45" stroke-width="2"/></svg>0K/s</span><span><svg viewBox="0 0 8 10"><path d="M4 1v8M1 6l3 3 3-3" fill="none" stroke="#259a52" stroke-width="2"/></svg>0K/s</span></div><svg class="plus" viewBox="0 0 20 20"><circle cx="9" cy="11" r="8.500" fill="#3d7fe0"/><path d="M9 7v8M5 11h8" stroke="#fff" stroke-width="1.800"/><circle cx="15.500" cy="4.500" r="4" fill="#d93434"/></svg></div><div class="ball">72%</div></div>
</div>
</body>
</html>
```
FILE: styles.css
```css
* { box-sizing: border-box; }
html, body { height: 100%; margin: 0; }
body { background: #f0f0f0; color: #000; font: 12px/16px "Open Sans", "Noto Sans CJK SC", sans-serif; overflow: hidden; }
button { border: 0; padding: 0; margin: 0; background: none; font: inherit; color: inherit; white-space: nowrap; }
h1, h2 { margin: 0; font: inherit; white-space: nowrap; }
svg { display: block; flex: none; }
b { font: 10px/16px "DejaVu Sans Mono", monospace; }
.sprite { position: absolute; width: 0; height: 0; }
.i { width: 16px; height: 16px; }
.app { display: flex; flex-direction: column; height: 100vh; position: relative; }

.title { display: flex; align-items: center; height: 23px; padding-left: 2px; gap: 5px; background: #fff; }
.title h1 { flex: 1; }
.title h1 span { font-size: 13px; }
.winbtns { display: flex; }
.winbtns button { width: 46px; height: 22px; display: flex; align-items: center; justify-content: center; }
.winbtns svg { width: 12px; height: 12px; }

.menurow { display: flex; height: 29px; align-items: stretch; }
.menu { flex: 0 0 804px; display: flex; align-items: center; gap: 2px; padding-left: 2px; }
.menu button { padding: 0 5px; }
.menu2 { flex: 0 0 133px; display: flex; align-items: center; }
.menu2, .menu { overflow: hidden; }
.panel { background: linear-gradient(#fafafa, #f0f0f0); display: flex; align-items: center; }
.ask { flex: 0 0 188px; padding-left: 39px; }
.ask a { color: #5a2d00; text-decoration: none; }
.acct { flex: 1; padding-left: 2px; }
.beans { padding: 0 6px; }

.toprow { display: flex; height: 30px; margin-bottom: 2px; gap: 2px; }
.bar { display: flex; align-items: center; background: linear-gradient(#fcfcfc, #f1f1f1); border-radius: 2px; }
.b1 { flex: 0 0 151px; }
.b2 { flex: 0 0 549px; }
.b3 { flex: 1; min-width: 0; }
.tb { display: flex; align-items: center; gap: 3px; height: 24px; padding: 0 4px; flex: none; }
.tb:disabled { color: #888; }
.tb:disabled .i { color: #b0b0b0; }
.hot { background: #dcebf7; box-shadow: inset 0 0 0 1px #0078d7; }
.car { width: 12px; height: 24px; display: flex; align-items: center; justify-content: center; flex: none; }
.car::before, .dd::after { content: ""; border: 3px solid transparent; border-top-color: #000; border-bottom: 0; }
.dd { padding-right: 2px; }
.sep { flex: none; width: 6px; height: 20px; background: linear-gradient(#b8b8b8, #b8b8b8) 2px 0 / 1px 100% no-repeat; }
.more { align-self: flex-start; margin-left: auto; padding: 0 4px; font-size: 15px; font-weight: 600; line-height: 18px; }
.white { display: flex; background: #fff; }
.white .car { background: #f4f4f4; }
.dots { flex: none; width: 7px; height: 16px; background: repeating-linear-gradient(#b5b5b5 0 2px, transparent 2px 4px) 3px 0 / 2px 100% no-repeat; }

.body { flex: 1; display: flex; min-height: 0; }
.side { flex: 0 0 177px; display: flex; flex-direction: column; padding-bottom: 3px; }
.sidehead { flex: none; height: 16px; background: #0054e3; color: #fff; display: flex; align-items: center; margin-bottom: 2px; gap: 6px; padding-right: 3px; }
.sidehead h2 { flex: 1; font-size: 13px; line-height: 15px; }
.sidehead svg { width: 12px; height: 12px; }
.stack { flex: none; height: 22px; margin-right: 2px; border: 1px solid #a0a0a0; box-shadow: inset 1px 1px #fff; background: #f0f0f0; line-height: 18px; }
.sidetools { flex: none; height: 26px; margin: 1px 2px 0 1px; border: 1px solid #a5a5a5; border-bottom: 0; background: linear-gradient(#fafafa, #f2f2f2); display: flex; align-items: center; padding-left: 4px; gap: 5px; }
.sidetools svg { width: 18px; height: 16px; }
.treebox { flex: 1; min-height: 0; display: flex; margin: 0 2px 1px 1px; border: 1px solid #8a8f94; background: #fff; padding: 0 1px 1px; }
.tree { flex: 1; margin: 0; padding: 0; list-style: none; overflow: hidden; white-space: nowrap; }
.tree li { height: 16px; line-height: 16px; display: flex; align-items: center; }
.tree .g { padding-left: 6px; gap: 4px; }
.tree .g .i { margin-left: 2px; }
.chev { width: 10px; height: 10px; fill: none; stroke: #404040; stroke-width: 2; }
.shut .chev { stroke: #a0a0a0; }
.tree .c { padding-left: 42px; background-repeat: no-repeat;
  background-image: repeating-linear-gradient(#888 0 1px, transparent 1px 2px), repeating-linear-gradient(#888 0 1px, transparent 1px 2px), repeating-linear-gradient(to right, #888 0 1px, transparent 1px 2px);
  background-size: 1px 16px, 1px 16px, 10px 1px; background-position: 12px 0, 31px 0, 32px 8px; }
.tree .end { background-size: 1px 16px, 1px 9px, 10px 1px; }
.tree span { display: flex; align-items: center; gap: 4px; padding-right: 5px; }
.tree span b { margin-left: -4px; }
.tree .on { background: #d9d9d9; }
.vscroll { width: 16px; background: #f0f0f0; display: flex; flex-direction: column; align-items: center; gap: 4px; padding: 4px 0; }
.track { flex: 1; width: 16px; }
.thumb { width: 100%; height: 68%; background: #cdcdcd; }

.work { flex: 1; min-width: 0; display: flex; flex-direction: column; padding: 1px 0 0 5px; }
.row { display: flex; flex: none; margin-bottom: 3px; }
.row .bar { height: 24px; padding-right: 1px; }
.r2 { gap: 73px; }
.r3 { padding-left: 412px; }
.r3 .bar { width: 31px; height: 23px; margin-bottom: 1px; }
.r4 { margin-bottom: 2px; }
.combo { position: relative; flex: none; width: 70px; margin-right: 2px; background: #fff; display: flex; }
.combo.first { width: 58px; }
.combo::after { content: ""; position: absolute; right: 4px; top: 11px; border: 3px solid transparent; border-top-color: #000; border-bottom: 0; pointer-events: none; }
.combo select { appearance: none; border: 0; background: none; width: 100%; height: 23px; padding: 0 2px; font: inherit; color: inherit; }
.canvas { position: relative; flex: none; height: 166px; margin-left: -1px; margin-right: 1px; background: #000; }
.cad { width: 100%; height: 100%; overflow: hidden; }
.marks { fill: #e8e8e8; font: 14px "DejaVu Sans Mono", monospace; text-anchor: middle; }
.mark { position: absolute; left: 388px; top: -21px; width: 188px; height: 210px; pointer-events: none; z-index: 2; }
.r5 { margin: 3px 0 5px; }

.detail { flex: 1; min-height: 0; display: flex; padding-bottom: 3px; }
.gripcol { flex: 0 0 11px; display: flex; flex-direction: column; gap: 2px; }
.gripcol svg { width: 10px; height: 10px; }
.griptex { flex: 1; background: radial-gradient(circle, #b4b4b4 1px, transparent 1px) 0 0 / 4px 4px; margin-right: 2px; }
.dmain { flex: 1; min-width: 0; display: flex; flex-direction: column; margin-right: 1px; }
.dbar { height: 26px; flex: none; padding-left: 2px; }
.nav { width: 23px; }
.total { padding-left: 5px; }
.gridbox { flex: 1; min-height: 0; background: #fff; border: 1px solid #a0a0a0; display: flex; flex-direction: column; overflow: hidden; }
table { border-collapse: separate; border-spacing: 0; table-layout: fixed; width: 1206px; flex: none; }
th, td { height: 19px; padding: 0; border-right: 1px solid #b0b0b0; border-bottom: 1px solid #b0b0b0; text-align: center; font-weight: 400; line-height: 16px; white-space: nowrap; }
thead th { height: 20px; background: linear-gradient(#fff, #efefef); }
thead .sel { background: linear-gradient(#fbd287, #f0bb5a); color: #5a0060; }
.rowno { background: #ffd58c; color: #5a0060; }
td.cur { background: #d9eaf9; box-shadow: inset 1px 0 #000; }
.w33 { width: 33px; } .w34 { width: 34px; } .w36 { width: 36px; } .w38 { width: 38px; } .w39 { width: 39px; } .w49 { width: 49px; } .w56 { width: 56px; } .w61 { width: 61px; } .w71 { width: 71px; } .w73 { width: 73px; } .w156 { width: 156px; } .w166 { width: 166px; } .w201 { width: 201px; }
.hscroll { margin-top: auto; flex: none; height: 17px; background: #f0f0f0; display: flex; align-items: center; gap: 4px; padding: 0 4px; }
.htrack { flex: 1; height: 15px; }
.hthumb { width: 72%; height: 15px; background: #cdcdcd; }

.status { flex: none; display: flex; height: 20px; gap: 2px; padding-bottom: 1px; }
.status span { border: 1px solid #d0d0d0; background: linear-gradient(#fff, #f2f2f2); line-height: 18px; padding-left: 1px; white-space: nowrap; }
.status b { line-height: 16px; }
.status .s1 { width: 148px; } .status .s2 { width: 78px; } .status .s3 { width: 98px; } .status .s4 { width: 48px; } .status .s5 { flex: 1; } .status .s6 { width: 70px; }

.task { flex: none; height: 40px; display: flex; background: #040b0e; color: #fff; }
.start { width: 48px; background: #000; display: flex; align-items: center; justify-content: center; }
.start svg { width: 16px; height: 16px; }
.search { flex: 0 0 344px; background: #333; display: flex; align-items: center; padding: 0 12px 0 8px; gap: 6px; }
.ring { width: 22px; height: 22px; }
.search input { flex: 1; min-width: 0; border: 0; background: none; padding: 0; color: #fff; font: 14px "Open Sans", "Noto Sans CJK SC", sans-serif; outline: 0; }
.search input::placeholder { color: #9a9a9a; }
.tmic { width: 16px; height: 20px; }
.apps { display: flex; }
.apps button { width: 48px; margin-right: 1px; height: 40px; display: flex; align-items: center; justify-content: center; }
.apps button.run { width: 47px; margin: 0; background: linear-gradient(#76b9ed, #76b9ed) center bottom / 38px 2px no-repeat; }
.apps button.act { background: linear-gradient(#76b9ed, #76b9ed) center bottom / 100% 2px no-repeat #33404a; }
.apps svg { width: 24px; height: 24px; }
.cpu, .clock { display: flex; flex-direction: column; align-items: center; justify-content: center; line-height: 18px; }
.cpu { flex: 0 0 86px; margin-left: 3px; }
.tray { flex: 1; display: flex; align-items: center; justify-content: space-between; padding-right: 14px; }
.tray svg { width: 16px; height: 16px; }
.tray svg.wide { width: 24px; }
.clock { flex: 0 0 68px; margin-left: auto; }
.notif { position: relative; flex: 0 0 56px; background: #000; }
.notif svg { width: 28px; height: 28px; margin-left: 12px; }
.notif span { position: absolute; left: 28px; top: 16px; font-size: 11px; }

.ime { position: absolute; right: 192px; top: 0; display: flex; align-items: flex-start; }
.logo { width: 28px; height: 28px; margin-right: -17px; z-index: 1; }
.imebar { display: flex; align-items: center; gap: 6px; height: 24px; margin-top: 3px; padding: 0 4px 0 22px; background: #fff; border: 1px solid #9fb8d8; color: #1d74cf; font-size: 15px; font-weight: 700; }
.imebar svg { width: 16px; height: 16px; }
.meter { position: absolute; left: 708px; top: 8px; width: 127px; height: 48px; display: flex; align-items: center; }
.caps { flex: 1; height: 38px; margin-left: 20px; padding: 0 4px 0 32px; border-radius: 0 19px 19px 0; background: linear-gradient(#ececec, #c9c9c9); box-shadow: 0 1px 4px #888; display: flex; align-items: center; justify-content: space-between; }
.rates { width: 46px; font-size: 10px; line-height: 15px; }
.rates span { display: flex; justify-content: space-between; align-items: center; }
.rates svg { width: 8px; height: 10px; }
.plus { width: 20px; height: 20px; }
.ball { position: absolute; left: 0; top: 0; width: 48px; height: 48px; border-radius: 50%; border: 2px solid #e8e8e8; background: linear-gradient(#2c8f52 0 26%, #4fcf63 28%, #46c45c); box-shadow: 0 1px 3px #666; color: #fff; font-size: 14px; line-height: 42px; text-align: center; }
```
